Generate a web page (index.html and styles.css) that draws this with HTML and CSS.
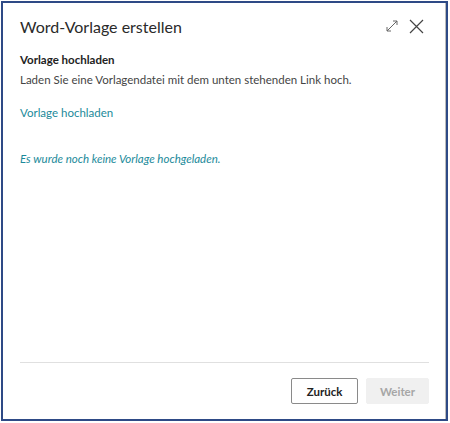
FILE: index.html
```html
<!DOCTYPE html>
<html lang="de">
<head>
<meta charset="utf-8">
<title>Word-Vorlage erstellen</title>
<link rel="stylesheet" href="styles.css">
</head>
<body>
<div class="frame">
  <div class="dialog">
    <header class="header">
      <h1 class="title">Word-Vorlage erstellen</h1>
      <div class="actions">
        <button class="icon-btn" aria-label="Maximieren">
          <svg width="14" height="14" viewBox="0 0 14 14" fill="none" stroke="#666" stroke-width="1">
            <path d="M2 12 L12 2 M8 2 H12 V6 M2 8 V12 H6"/>
          </svg>
        </button>
        <button class="icon-btn" aria-label="Schließen">
          <svg width="15" height="15" viewBox="0 0 15 15" fill="none" stroke="#444" stroke-width="1.2">
            <path d="M1 1 L14 14 M14 1 L1 14"/>
          </svg>
        </button>
      </div>
    </header>
    <main class="content">
      <h2 class="section-title">Vorlage hochladen</h2>
      <p class="desc">Laden Sie eine Vorlagendatei mit dem unten stehenden Link hoch.</p>
      <a class="link" href="#">Vorlage hochladen</a>
      <p class="status">Es wurde noch keine Vorlage hochgeladen.</p>
    </main>
    <footer class="footer">
      <button class="btn btn-secondary">Zurück</button>
      <button class="btn btn-disabled" disabled>Weiter</button>
    </footer>
  </div>
</div>
</body>
</html>
```
FILE: styles.css
```css
html, body {
  margin: 0;
  padding: 0;
  background: #ffffff;
}
body {
  font-family: Lato, "Open Sans", sans-serif;
  color: #333;
}
.frame {
  margin: 1px 0 0 1px;
  width: 443px;
  height: 416px;
  border: 2px solid #2e4a86;
  box-shadow: inset -1px 0 0 #bbb;
  background: #fff;
}
.dialog {
  height: 100%;
  display: flex;
  flex-direction: column;
  padding: 0 17px 0 17px;
  box-sizing: border-box;
}
.header {
  display: flex;
  align-items: center;
  justify-content: space-between;
  height: 46px;
}
.title {
  margin: 0;
  font-size: 16px;
  font-weight: 400;
  color: #2a2a2a;
}
.actions {
  display: flex;
  gap: 10px;
  align-items: center;
  margin-right: 5px;
}
.icon-btn {
  background: none;
  border: 0;
  padding: 0;
  display: flex;
}
.content {
  flex: 1;
  padding-top: 3px;
}
.section-title {
  margin: 0;
  font-size: 11.5px;
  line-height: 16px;
  font-weight: 700;
  color: #222;
}
.desc {
  margin: 4px 0 0;
  font-size: 11.5px;
  line-height: 16px;
  color: #444;
}
.link {
  display: block;
  margin-top: 17px;
  font-size: 11.5px;
  line-height: 16px;
  color: #1b8a9a;
  text-decoration: none;
}
.status {
  margin: 30px 0 0;
  font-size: 11.5px;
  line-height: 16px;
  font-style: italic;
  color: #1b8a9a;
}
.footer {
  border-top: 1px solid #e0e0e0;
  height: 55px;
  display: flex;
  justify-content: flex-end;
  align-items: flex-start;
  gap: 8px;
  padding-top: 15px;
  box-sizing: border-box;
  margin-bottom: 2px;
}
.btn {
  font-family: inherit;
  font-size: 11.5px;
  font-weight: 700;
  height: 26px;
  border-radius: 2px;
  padding: 0;
}
.btn-secondary {
  background: #fff;
  border: 1px solid #8a8a8a;
  color: #222;
  width: 67px;
}
.btn-disabled {
  background: #f0f0f0;
  border: 1px solid #f0f0f0;
  color: #a6a6a6;
  width: 63px;
}
```
